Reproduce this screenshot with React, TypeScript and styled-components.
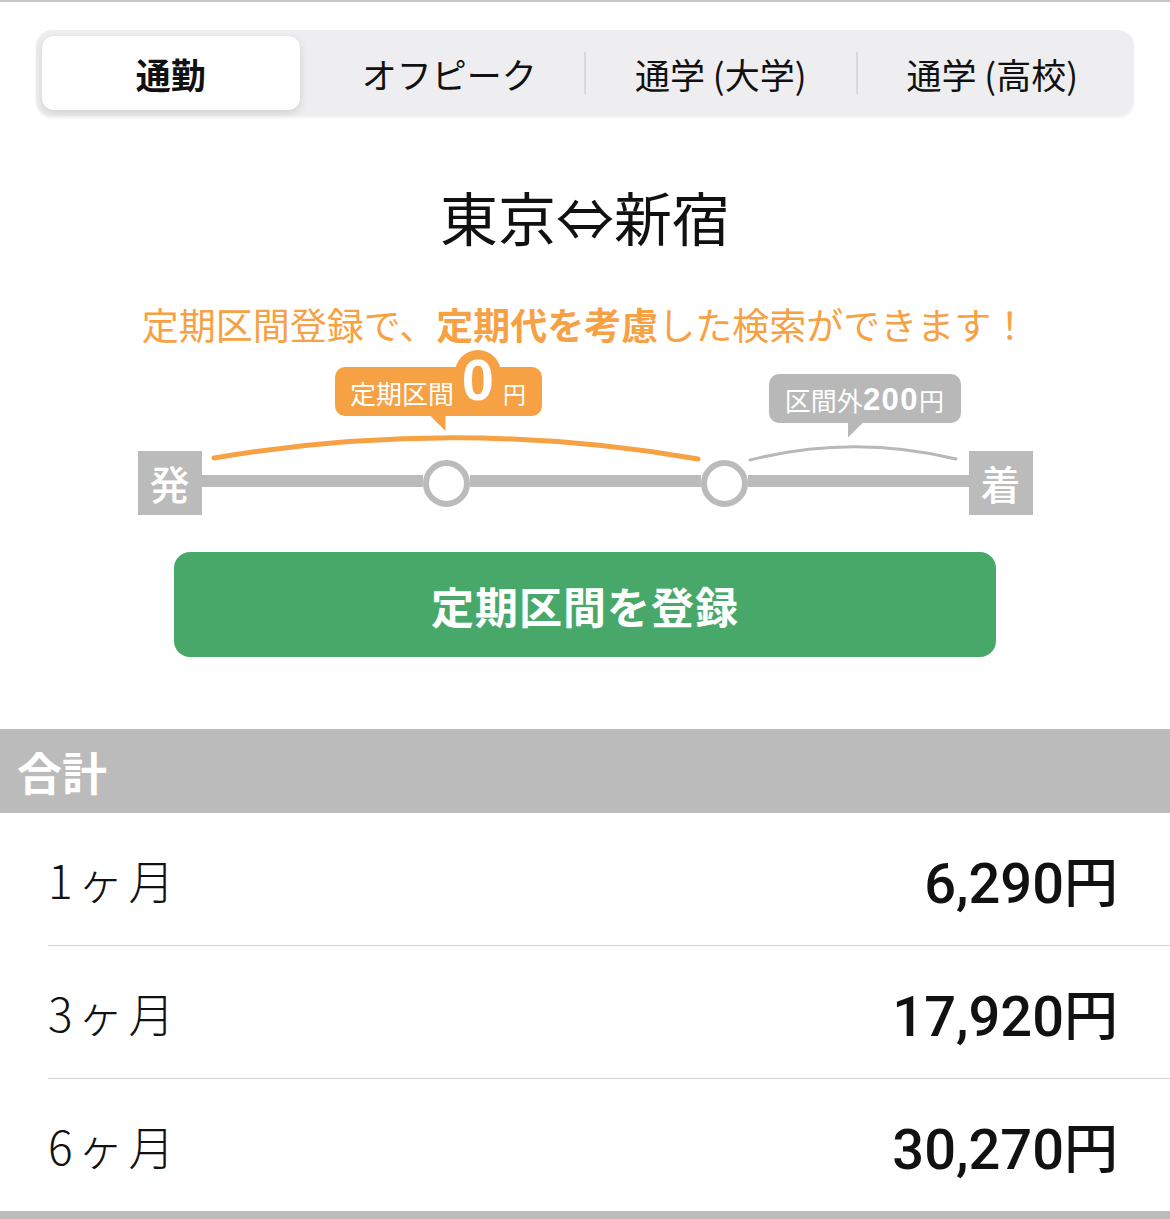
import React from "react";
import styled, { createGlobalStyle, css } from "styled-components";

const ORANGE = "#f7a145";
const GRAY = "#bbbbbb";

const GlobalStyle = createGlobalStyle`
  html, body { margin: 0; padding: 0; background: #ffffff; }
  body {
    font-family: "Noto Sans CJK JP", "Noto Sans", sans-serif;
    color: #111111;
    -webkit-font-smoothing: antialiased;
  }
`;

const Page = styled.div`
  width: 1170px;
  border-top: 2px solid #c6c6c6;
  display: flex;
  flex-direction: column;
`;

const Segmented = styled.div`
  margin: 28px 36px 0;
  height: 86px;
  box-sizing: border-box;
  padding: 6px;
  background: #eeeef0;
  border-radius: 16px;
  display: grid;
  grid-template-columns: repeat(4, 1fr);
  box-shadow: 0 2px 3px rgba(0, 0, 0, 0.05);
`;

const Segment = styled.div<{ $active?: boolean; $divider?: boolean }>`
  position: relative;
  display: flex;
  align-items: center;
  justify-content: center;
  font-size: 35px;
  font-weight: ${(p) => (p.$active ? 700 : 400)};
  color: #111111;
  white-space: nowrap;
  ${(p) =>
    p.$active &&
    css`
      background: #ffffff;
      border-radius: 12px;
      margin-right: 14px;
      box-shadow: 0 3px 8px rgba(0, 0, 0, 0.13);
    `}
  ${(p) =>
    p.$divider &&
    css`
      &::before {
        content: "";
        position: absolute;
        left: -1px;
        top: 16px;
        bottom: 16px;
        width: 2px;
        background: #d8d8da;
      }
    `}
`;

const Route = styled.h1`
  margin: 64px 0 0;
  text-align: center;
  font-size: 58px;
  font-weight: 400;
  line-height: 72px;
  color: #111111;
`;

const Lead = styled.p`
  margin: 50px 0 0;
  text-align: center;
  font-size: 37px;
  line-height: 44px;
  color: ${ORANGE};
  strong {
    font-weight: 700;
  }
`;

const Diagram = styled.div`
  position: relative;
  width: 895px;
  margin: 0 auto;
  padding-top: 105px;
`;

const Arcs = styled.svg`
  position: absolute;
  left: 0;
  top: 0;
  width: 895px;
  height: 140px;
  overflow: visible;
`;

const Bubble = styled.div<{ $tone: "orange" | "gray" }>`
  position: absolute;
  height: 49px;
  box-sizing: border-box;
  border-radius: 10px;
  display: flex;
  align-items: center;
  justify-content: center;
  color: #ffffff;
  white-space: nowrap;
  background: ${(p) => (p.$tone === "orange" ? ORANGE : "#b8b8b8")};
  &::after {
    content: "";
    position: absolute;
    top: 100%;
    width: 15px;
    height: 15px;
    background: inherit;
  }
  ${(p) =>
    p.$tone === "orange"
      ? css`
          left: 197px;
          top: 21px;
          width: 207px;
          &::after {
            left: 96px;
            clip-path: polygon(0 0, 100% 0, 100% 100%);
          }
        `
      : css`
          left: 631px;
          top: 28px;
          width: 192px;
          &::after {
            left: 79px;
            clip-path: polygon(0 0, 100% 0, 0 100%);
          }
        `}
`;

const BubbleText = styled.span<{ $size: number }>`
  font-size: ${(p) => p.$size}px;
  line-height: 1;
  padding-top: 3px;
`;

const Zero = styled.span`
  align-self: flex-start;
  margin: -17px 2px 0 1px;
  width: 46px;
  height: 60px;
  border-radius: 23px;
  background: ${ORANGE};
  display: flex;
  justify-content: center;
  font-family: "Liberation Sans", Arial, sans-serif;
  font-weight: 700;
  font-size: 58px;
  line-height: 60px;
  color: #ffffff;
`;

const Amount = styled.span`
  font-family: "Liberation Sans", Arial, sans-serif;
  font-weight: 700;
  font-size: 31px;
  letter-spacing: 1.5px;
  line-height: 1;
  padding-top: 2px;
`;

const Rail = styled.div`
  display: flex;
  align-items: center;
  height: 64px;
`;

const Station = styled.div`
  width: 64px;
  height: 64px;
  background: ${GRAY};
  color: #ffffff;
  font-size: 40px;
  font-weight: 500;
  display: flex;
  align-items: center;
  justify-content: center;
  flex: none;
`;

const Track = styled.div<{ $grow: number }>`
  flex: ${(p) => p.$grow} 1 0;
  height: 12px;
  margin-bottom: 4px;
  background: ${GRAY};
`;

const Stop = styled.div`
  flex: none;
  width: 47px;
  height: 47px;
  box-sizing: border-box;
  border: 6px solid ${GRAY};
  border-radius: 50%;
  background: #ffffff;
`;

const RegisterButton = styled.button`
  display: block;
  margin: 37px auto 0;
  width: 822px;
  height: 105px;
  border: none;
  border-radius: 16px;
  background: #48a869;
  color: #ffffff;
  font-family: inherit;
  font-size: 43px;
  font-weight: 700;
  letter-spacing: 1px;
  padding: 0;
`;

const SectionHeader = styled.div`
  margin-top: 72px;
  height: 84px;
  background: ${GRAY};
  color: #ffffff;
  font-size: 45px;
  font-weight: 700;
  display: flex;
  align-items: center;
  padding-left: 17px;
`;

const Rows = styled.div`
  margin-left: 48px;
  display: flex;
  flex-direction: column;
`;

const Row = styled.div`
  height: 133px;
  box-sizing: border-box;
  display: flex;
  align-items: center;
  justify-content: space-between;
  padding-right: 52px;
  border-bottom: 1px solid #d2d2d2;
  &:last-child {
    border-bottom: none;
    height: 132px;
  }
`;

const Term = styled.span`
  font-size: 46px;
  font-weight: 300;
  letter-spacing: 5px;
  color: #111111;
`;

const Price = styled.span`
  font-family: Roboto, "Liberation Sans", "Noto Sans CJK JP", sans-serif;
  font-size: 56px;
  font-weight: 500;
  color: #111111;
`;

const Yen = styled.span`
  font-family: "Noto Sans CJK JP", sans-serif;
  font-size: 54px;
  font-weight: 500;
`;

const FooterBar = styled.div`
  height: 8px;
  background: ${GRAY};
`;

const tabs = [
  { label: "通勤", active: true },
  { label: "オフピーク" },
  { label: "通学 (大学)", divider: true },
  { label: "通学 (高校)", divider: true },
];

const prices = [
  { term: "1ヶ月", price: "6,290" },
  { term: "3ヶ月", price: "17,920" },
  { term: "6ヶ月", price: "30,270" },
];

export default function App() {
  return (
    <Page>
      <GlobalStyle />
      <Segmented>
        {tabs.map((t) => (
          <Segment key={t.label} $active={t.active} $divider={t.divider}>
            {t.label}
          </Segment>
        ))}
      </Segmented>

      <Route>東京⇔新宿</Route>

      <Lead>
        定期区間登録で、<strong>定期代を考慮</strong>した検索ができます！
      </Lead>

      <Diagram>
        <Arcs viewBox="0 0 895 140">
          <path
            d="M76 112 Q318 71 560 113"
            fill="none"
            stroke={ORANGE}
            strokeWidth={5}
            strokeLinecap="round"
          />
          <path
            d="M612 114 Q715 88 818 113"
            fill="none"
            stroke="#b8b8b8"
            strokeWidth={3}
            strokeLinecap="round"
          />
        </Arcs>
        <Bubble $tone="orange">
          <BubbleText $size={26}>定期区間</BubbleText>
          <Zero>0</Zero>
          <BubbleText $size={23}>円</BubbleText>
        </Bubble>
        <Bubble $tone="gray">
          <BubbleText $size={26}>区間外</BubbleText>
          <Amount>200</Amount>
          <BubbleText $size={25}>円</BubbleText>
        </Bubble>
        <Rail>
          <Station>発</Station>
          <Track $grow={221} />
          <Stop />
          <Track $grow={231} />
          <Stop />
          <Track $grow={221} />
          <Station>着</Station>
        </Rail>
      </Diagram>

      <RegisterButton>定期区間を登録</RegisterButton>

      <SectionHeader>合計</SectionHeader>
      <Rows>
        {prices.map((p) => (
          <Row key={p.term}>
            <Term>{p.term}</Term>
            <Price>
              {p.price}
              <Yen>円</Yen>
            </Price>
          </Row>
        ))}
      </Rows>
      <FooterBar />
    </Page>
  );
}
